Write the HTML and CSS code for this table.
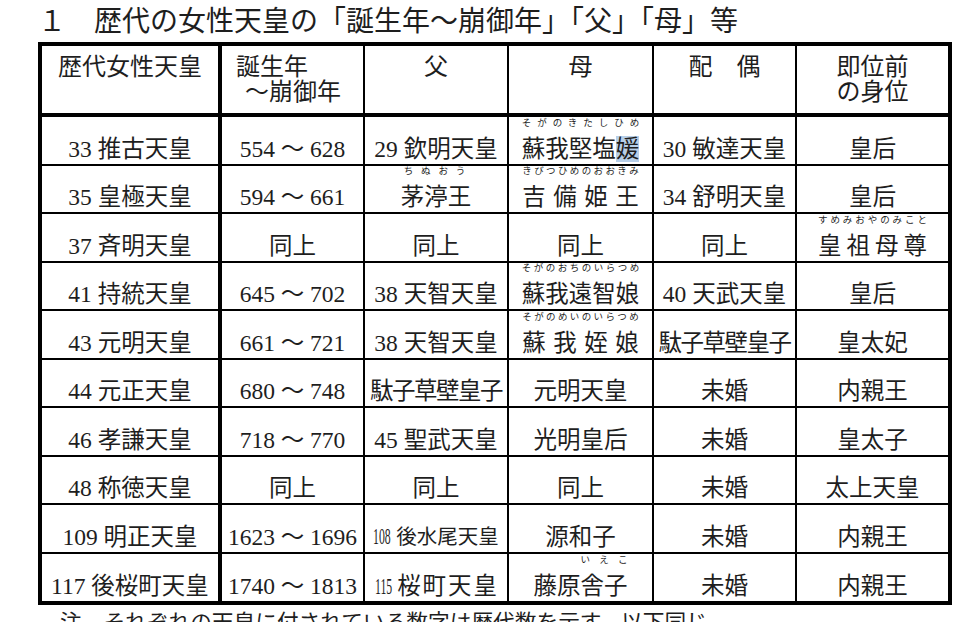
FILE: index.html
```html
<!DOCTYPE html>
<html lang="ja">
<head>
<meta charset="utf-8">
<title>歴代の女性天皇</title>
<link rel="stylesheet" href="styles.css">
</head>
<body>
<h1 class="title"><span class="num">１</span>　歴代の女性天皇の「誕生年～崩御年」「父」「母」等</h1>
<table class="tbl">
  <colgroup>
    <col class="c1"><col class="c2"><col class="c3"><col class="c4"><col class="c5"><col class="c6">
  </colgroup>
  <thead>
    <tr>
      <th class="first">歴代女性天皇</th>
      <th class="left">誕生年<br><span class="indent">～崩御年</span></th>
      <th>父</th>
      <th>母</th>
      <th>配　偶</th>
      <th class="last">即位前<br>の身位</th>
    </tr>
  </thead>
  <tbody>
    <tr>
      <td class="first">33 推古天皇</td>
      <td>554 ～ 628</td>
      <td>29 欽明天皇</td>
      <td><span class="rb">蘇我堅塩<span class="sel">媛</span><span class="rt">そがのきたしひめ</span></span></td>
      <td>30 敏達天皇</td>
      <td class="last">皇后</td>
    </tr>
    <tr>
      <td class="first">35 皇極天皇</td>
      <td>594 ～ 661</td>
      <td><span class="rb rb-narrow">茅渟王<span class="rt">ちぬおう</span></span></td>
      <td><span class="rb"><span class="wide8">吉備姫王</span><span class="rt">きびつひめのおおきみ</span></span></td>
      <td>34 舒明天皇</td>
      <td class="last">皇后</td>
    </tr>
    <tr>
      <td class="first">37 斉明天皇</td>
      <td>同上</td>
      <td>同上</td>
      <td>同上</td>
      <td>同上</td>
      <td class="last"><span class="rb"><span class="wide5">皇祖母尊</span><span class="rt">すめみおやのみこと</span></span></td>
    </tr>
    <tr>
      <td class="first">41 持統天皇</td>
      <td>645 ～ 702</td>
      <td>38 天智天皇</td>
      <td><span class="rb">蘇我遠智娘<span class="rt">そがのおちのいらつめ</span></span></td>
      <td>40 天武天皇</td>
      <td class="last">皇后</td>
    </tr>
    <tr>
      <td class="first">43 元明天皇</td>
      <td>661 ～ 721</td>
      <td>38 天智天皇</td>
      <td><span class="rb"><span class="wide8">蘇我姪娘</span><span class="rt">そがのめいのいらつめ</span></span></td>
      <td><span class="tight">駄子草壁皇子</span></td>
      <td class="last">皇太妃</td>
    </tr>
    <tr>
      <td class="first">44 元正天皇</td>
      <td>680 ～ 748</td>
      <td><span class="tight">駄子草壁皇子</span></td>
      <td>元明天皇</td>
      <td>未婚</td>
      <td class="last">内親王</td>
    </tr>
    <tr>
      <td class="first">46 孝謙天皇</td>
      <td>718 ～ 770</td>
      <td>45 聖武天皇</td>
      <td>光明皇后</td>
      <td>未婚</td>
      <td class="last">皇太子</td>
    </tr>
    <tr>
      <td class="first">48 称徳天皇</td>
      <td>同上</td>
      <td>同上</td>
      <td>同上</td>
      <td>未婚</td>
      <td class="last">太上天皇</td>
    </tr>
    <tr>
      <td class="first">109 明正天皇</td>
      <td>1623 ～ 1696</td>
      <td><span class="mini">108</span> <span class="small">後水尾天皇</span></td>
      <td>源和子</td>
      <td>未婚</td>
      <td class="last">内親王</td>
    </tr>
    <tr class="lastrow">
      <td class="first">117 後桜町天皇</td>
      <td>1740 ～ 1813</td>
      <td><span class="mini">115</span> <span class="spaced">桜町天皇</span></td>
      <td>藤原<span class="rb">舎子<span class="rt">いえこ</span></span></td>
      <td>未婚</td>
      <td class="last">内親王</td>
    </tr>
  </tbody>
</table>
<p class="note">注　それぞれの天皇に付されている数字は歴代数を示す。以下同じ</p>
</body>
</html>
```

FILE: styles.css
```css
html, body {
  margin: 0;
  padding: 0;
  background: #ffffff;
}

body {
  width: 958px;
  height: 622px;
  overflow: hidden;
  color: #1e1e1e;
  font-family: "Liberation Serif", "Noto Sans CJK JP", serif;
}

.title {
  margin: 0;
  padding: 2px 0 0 38px;
  height: 40px;
  box-sizing: border-box;
  font-family: "Noto Sans CJK JP", sans-serif;
  font-weight: 400;
  font-size: 28px;
  line-height: 34px;
  white-space: nowrap;
}

.tbl {
  margin-left: 38px;
  margin-top: 2px;
  width: 914px;
  border: 4px solid #000;
  border-collapse: separate;
  border-spacing: 0;
  table-layout: fixed;
}

.c1 { width: 180px; }
.c2 { width: 143px; }
.c3 { width: 144px; }
.c4 { width: 145px; }
.c5 { width: 143px; }
.c6 { width: 151px; }

.tbl th,
.tbl td {
  box-sizing: border-box;
  padding: 0;
  border-right: 2px solid #000;
  border-bottom: 2px solid #000;
  text-align: center;
  white-space: nowrap;
  font-size: 23.5px;
}

.tbl .first { border-right-width: 4px; }
.tbl .last { border-right: none; }

.tbl th {
  height: 71px;
  border-bottom-width: 4px;
  vertical-align: top;
  padding-top: 6px;
  font-family: "Noto Sans CJK JP", sans-serif;
  font-weight: 400;
  font-size: 24px;
  line-height: 25px;
}

.tbl th.left {
  text-align: left;
  padding-left: 14px;
}

.indent { padding-left: 9px; }

.tbl td {
  height: 48.5px;
  vertical-align: bottom;
  line-height: 28px;
  padding-bottom: 1px;
}

.tbl .lastrow td { border-bottom: none; height: 47px; }

.rb {
  position: relative;
  display: inline-block;
}

.rt {
  position: absolute;
  left: 0;
  right: 0;
  bottom: calc(100% + 8px);
  font-family: "Noto Sans CJK JP", sans-serif;
  font-size: 9.5px;
  line-height: 10px;
  text-align: justify;
  text-align-last: justify;
  white-space: normal;
}

.rb-narrow .rt { left: 3px; right: 6px; }

.sel { background: #b7cfe9; }

.wide8 { letter-spacing: 7.5px; margin-right: -7.5px; }
.wide5 { letter-spacing: 5px; margin-right: -5px; }

.tight { letter-spacing: -1.5px; }

.small { font-size: 20.5px; }
.spaced { letter-spacing: 2px; margin-right: -2px; }

.mini {
  display: inline-block;
  font-size: 23.5px;
  transform: scaleX(0.5);
  transform-origin: left center;
  margin-right: -18px;
}

.note {
  margin: 1px 0 0 60px;
  font-family: "Noto Sans CJK JP", sans-serif;
  font-size: 21.7px;
  line-height: 30px;
  white-space: nowrap;
}
```
